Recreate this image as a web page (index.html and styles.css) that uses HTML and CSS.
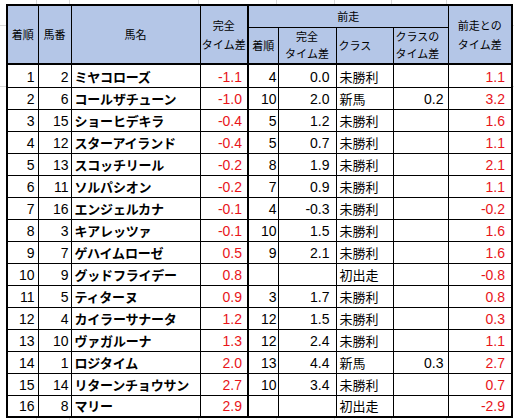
FILE: index.html
```html
<!DOCTYPE html>
<html lang="ja">
<head>
<meta charset="utf-8">
<link rel="stylesheet" href="styles.css">
</head>
<body>
<div class="sheet">
<table class="tbl">
<colgroup>
<col class="c1"><col class="c2"><col class="c3"><col class="c4"><col class="c5"><col class="c6"><col class="c7"><col class="c8"><col class="c9">
</colgroup>
<thead>
<tr class="h1">
<th rowspan="2">着順</th>
<th rowspan="2">馬番</th>
<th rowspan="2">馬名</th>
<th rowspan="2" class="tall sepr">完全<br>タイム差</th>
<th colspan="4">前走</th>
<th rowspan="2" class="tall">前走との<br>タイム差</th>
</tr>
<tr class="h2">
<th class="sub">着順</th>
<th class="sub">完全<br>タイム差</th>
<th class="sub left">クラス</th>
<th class="sub left">クラスの<br>タイム差</th>
</tr>
</thead>
<tbody>
<tr class="first"><td class="n1">1</td><td class="n2">2</td><td class="nm">ミヤコローズ</td><td class="n4 red sepr">-1.1</td><td class="n5">4</td><td class="n6">0.0</td><td class="cl">未勝利</td><td class="n8"></td><td class="n9 red">1.1</td></tr>
<tr><td class="n1">2</td><td class="n2">6</td><td class="nm">コールザチューン</td><td class="n4 red sepr">-1.0</td><td class="n5">10</td><td class="n6">2.0</td><td class="cl">新馬</td><td class="n8">0.2</td><td class="n9 red">3.2</td></tr>
<tr><td class="n1">3</td><td class="n2">15</td><td class="nm">ショーヒデキラ</td><td class="n4 red sepr">-0.4</td><td class="n5">5</td><td class="n6">1.2</td><td class="cl">未勝利</td><td class="n8"></td><td class="n9 red">1.6</td></tr>
<tr><td class="n1">4</td><td class="n2">12</td><td class="nm">スターアイランド</td><td class="n4 red sepr">-0.4</td><td class="n5">5</td><td class="n6">0.7</td><td class="cl">未勝利</td><td class="n8"></td><td class="n9 red">1.1</td></tr>
<tr><td class="n1">5</td><td class="n2">13</td><td class="nm">スコッチリール</td><td class="n4 red sepr">-0.2</td><td class="n5">8</td><td class="n6">1.9</td><td class="cl">未勝利</td><td class="n8"></td><td class="n9 red">2.1</td></tr>
<tr><td class="n1">6</td><td class="n2">11</td><td class="nm">ソルパシオン</td><td class="n4 red sepr">-0.2</td><td class="n5">7</td><td class="n6">0.9</td><td class="cl">未勝利</td><td class="n8"></td><td class="n9 red">1.1</td></tr>
<tr><td class="n1">7</td><td class="n2">16</td><td class="nm">エンジェルカナ</td><td class="n4 red sepr">-0.1</td><td class="n5">4</td><td class="n6">-0.3</td><td class="cl">未勝利</td><td class="n8"></td><td class="n9 red">-0.2</td></tr>
<tr><td class="n1">8</td><td class="n2">3</td><td class="nm">キアレッツァ</td><td class="n4 red sepr">-0.1</td><td class="n5">10</td><td class="n6">1.5</td><td class="cl">未勝利</td><td class="n8"></td><td class="n9 red">1.6</td></tr>
<tr><td class="n1">9</td><td class="n2">7</td><td class="nm">ゲハイムローゼ</td><td class="n4 red sepr">0.5</td><td class="n5">9</td><td class="n6">2.1</td><td class="cl">未勝利</td><td class="n8"></td><td class="n9 red">1.6</td></tr>
<tr><td class="n1">10</td><td class="n2">9</td><td class="nm">グッドフライデー</td><td class="n4 red sepr">0.8</td><td class="n5"></td><td class="n6"></td><td class="cl">初出走</td><td class="n8"></td><td class="n9 red">-0.8</td></tr>
<tr><td class="n1">11</td><td class="n2">5</td><td class="nm">ティターヌ</td><td class="n4 red sepr">0.9</td><td class="n5">3</td><td class="n6">1.7</td><td class="cl">未勝利</td><td class="n8"></td><td class="n9 red">0.8</td></tr>
<tr><td class="n1">12</td><td class="n2">4</td><td class="nm">カイラーサナータ</td><td class="n4 red sepr">1.2</td><td class="n5">12</td><td class="n6">1.5</td><td class="cl">未勝利</td><td class="n8"></td><td class="n9 red">0.3</td></tr>
<tr><td class="n1">13</td><td class="n2">10</td><td class="nm">ヴァガルーナ</td><td class="n4 red sepr">1.3</td><td class="n5">12</td><td class="n6">2.4</td><td class="cl">未勝利</td><td class="n8"></td><td class="n9 red">1.1</td></tr>
<tr><td class="n1">14</td><td class="n2">1</td><td class="nm">ロジタイム</td><td class="n4 red sepr">2.0</td><td class="n5">13</td><td class="n6">4.4</td><td class="cl">新馬</td><td class="n8">0.3</td><td class="n9 red">2.7</td></tr>
<tr><td class="n1">15</td><td class="n2">14</td><td class="nm">リターンチョウサン</td><td class="n4 red sepr">2.7</td><td class="n5">10</td><td class="n6">3.4</td><td class="cl">未勝利</td><td class="n8"></td><td class="n9 red">0.7</td></tr>
<tr><td class="n1">16</td><td class="n2">8</td><td class="nm">マリー</td><td class="n4 red sepr">2.9</td><td class="n5"></td><td class="n6"></td><td class="cl">初出走</td><td class="n8"></td><td class="n9 red">-2.9</td></tr>
</tbody>
</table>
</div>
</body>
</html>
```

FILE: styles.css
```css
html, body {
  margin: 0;
  padding: 0;
  background: #ffffff;
}

.sheet {
  width: 514px;
  height: 420px;
  box-sizing: border-box;
  padding: 4px 0 0 6px;
  background-image:
    linear-gradient(to right, transparent 36px, #d9d9d9 36px, #d9d9d9 37px, transparent 37px),
    linear-gradient(to right, transparent 69px, #d9d9d9 69px, #d9d9d9 70px, transparent 70px),
    linear-gradient(to right, transparent 198px, #d9d9d9 198px, #d9d9d9 199px, transparent 199px),
    linear-gradient(to right, transparent 276px, #d9d9d9 276px, #d9d9d9 277px, transparent 277px),
    linear-gradient(to right, transparent 334px, #d9d9d9 334px, #d9d9d9 335px, transparent 335px),
    linear-gradient(to right, transparent 391px, #d9d9d9 391px, #d9d9d9 392px, transparent 392px),
    linear-gradient(to right, transparent 446px, #d9d9d9 446px, #d9d9d9 447px, transparent 447px),
    linear-gradient(to bottom, transparent 25px, #d9d9d9 25px, #d9d9d9 26px, transparent 26px),
    linear-gradient(to bottom, transparent 86px, #d9d9d9 86px, #d9d9d9 87px, transparent 87px);
  background-repeat: no-repeat;
  font-family: "Liberation Sans", "Noto Sans CJK JP", sans-serif;
}

.tbl {
  border-collapse: collapse;
  table-layout: fixed;
  width: 505px;
  border: 2px solid #000;
  background: #ffffff;
}

.c1 { width: 31px; }
.c2 { width: 33px; }
.c3 { width: 129px; }
.c4 { width: 48px; }
.c5 { width: 30px; }
.c6 { width: 58px; }
.c7 { width: 57px; }
.c8 { width: 55px; }
.c9 { width: 64px; }

th, td {
  border: 1px solid #000;
  padding: 0;
  overflow: hidden;
  white-space: nowrap;
}

th {
  background: #b4c6e7;
  font-family: "Noto Sans CJK JP", sans-serif;
  font-weight: normal;
  font-size: 11px;
  line-height: 19px;
  color: #000;
  text-align: center;
  vertical-align: middle;
}

thead {
  border-bottom: 2px solid #000;
}

.h1 { height: 22px; }
.h2 { height: 37px; }

th.sub {
  line-height: 17px;
}

th.left {
  text-align: left;
  padding-left: 2px;
}

.sepr {
  border-right: 2px solid #000;
}

tbody tr {
  height: 22px;
}

tbody tr.first {
  height: 23px;
}

td {
  font-size: 14px;
  line-height: 18px;
  color: #000;
  text-align: right;
  vertical-align: bottom;
  padding-bottom: 1px;
}

td.nm {
  text-align: left;
  font-family: "Noto Sans CJK JP", sans-serif;
  font-weight: bold;
  font-size: 13px;
  padding-left: 3px;
  letter-spacing: -0.2px;
}

td.cl {
  text-align: left;
  font-family: "Noto Sans CJK JP", sans-serif;
  font-size: 13px;
  padding-left: 3px;
}

.n1 { padding-right: 3px; }
.n2 { padding-right: 2px; }
.n4 { padding-right: 5px; }
.n5 { padding-right: 1px; }
.n6 { padding-right: 6px; }
.n8 { padding-right: 4px; }
.n9 { padding-right: 6px; }

.red {
  color: #e8141a;
}
```
